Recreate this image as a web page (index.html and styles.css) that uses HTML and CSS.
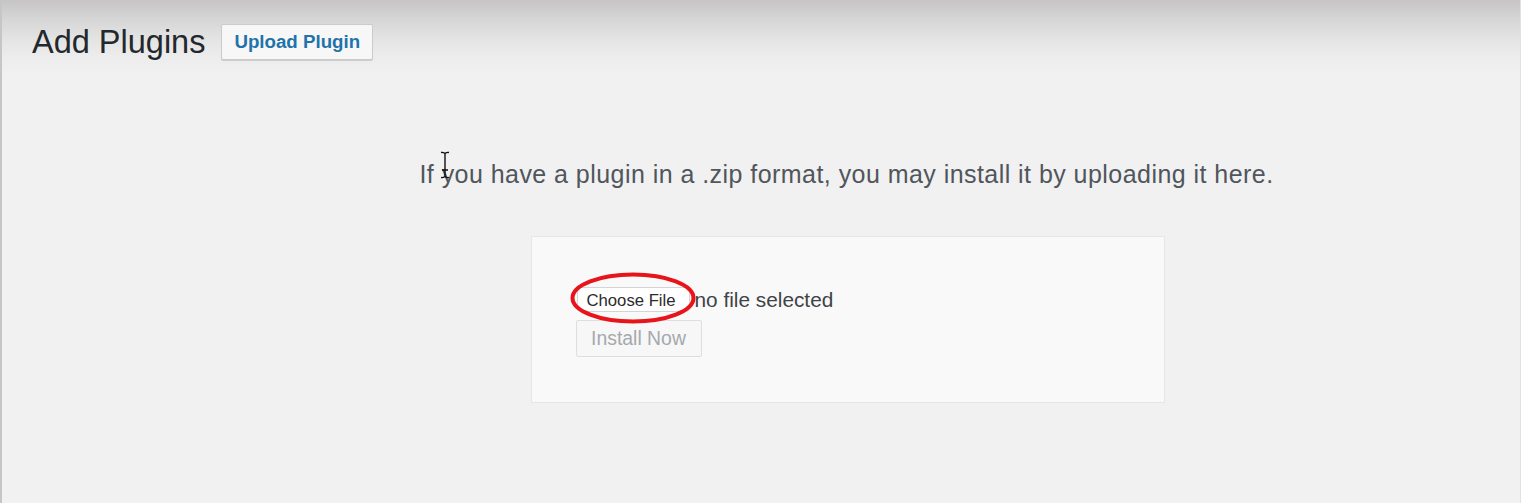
FILE: index.html
```html
<!DOCTYPE html>
<html lang="en">
<head>
<meta charset="utf-8">
<title>Add Plugins</title>
<link rel="stylesheet" href="styles.css">
</head>
<body>
<div class="page">
  <div class="header">
    <h1 class="title">Add Plugins</h1>
    <button class="upload-btn" type="button">Upload Plugin</button>
  </div>
  <div class="upload">
    <p class="help">If you have a plugin in a .zip format, you may install it by uploading it here.</p>
    <div class="box">
      <div class="file-row">
        <span class="choose">Choose File</span>
        <span class="nofile">no file selected</span>
      </div>
      <button class="install" type="button" disabled>Install Now</button>
      <svg class="ring" width="126" height="52" viewBox="0 0 126 52"><ellipse cx="63" cy="26" rx="60.5" ry="23.5" fill="none" stroke="#e8141c" stroke-width="4"/></svg>
    </div>
  </div>
  <svg class="ibeam" width="10" height="28" viewBox="0 0 10 28"><path d="M1 1.5 Q3 1 5 2.5 Q7 1 9 1.5 M5 2.5 V25.5 M1 26.5 Q3 27 5 25.5 Q7 27 9 26.5 M2 19 H8" fill="none" stroke="#111" stroke-width="1.4"/></svg>
</div>
</body>
</html>
```
FILE: styles.css
```css
html, body {
  margin: 0;
  padding: 0;
}
body {
  font-family: "Liberation Sans", Arial, sans-serif;
  background: #f1f1f1;
}
.page {
  position: relative;
  min-height: 503px;
  box-sizing: border-box;
  border-left: 2px solid #c4c6c8;
  border-right: 1px solid #e2e2e2;
  background: linear-gradient(#c6c4c4 0px, #d6d5d5 18px, #e3e3e3 38px, #ececec 55px, #f1f1f1 75px, #f1f1f1 100%);
  padding: 24px 0 0 30px;
}
.header {
  display: flex;
  align-items: center;
  gap: 16px;
}
.title {
  margin: 0;
  font-size: 32.5px;
  font-weight: 400;
  line-height: 36px;
  color: #23282d;
}
.upload-btn {
  height: 36px;
  padding: 0 12px;
  border: 1px solid #cbcbcb;
  border-radius: 2px;
  background: #f7f7f7;
  color: #1f73aa;
  font-family: "Liberation Sans", Arial, sans-serif;
  font-weight: 700;
  font-size: 18.7px;
  box-shadow: 0 1px 0 #ccc;
}
.upload {
  padding-left: 141px;
  text-align: center;
  margin-top: 99px;
}
.help {
  margin: 0;
  font-size: 25px;
  letter-spacing: 0.45px;
  line-height: 30px;
  color: #50565c;
}
.box {
  position: relative;
  display: inline-block;
  width: 634px;
  height: 167px;
  box-sizing: border-box;
  margin-top: 47px;
  margin-left: 2px;
  border: 1px solid #e6e6e6;
  background: #f9f9f9;
  padding: 50px 44px;
  text-align: left;
}
.file-row {
  display: flex;
  align-items: center;
  gap: 5px;
}
.choose {
  display: inline-block;
  height: 25px;
  line-height: 25px;
  box-sizing: border-box;
  padding: 0 13px 0 9px;
  border: 1px solid #d4d4d4;
  border-radius: 4px;
  background: #fff;
  color: #2b2b2b;
  font-size: 16.7px;
  margin-left: 1px;
}
.nofile {
  font-size: 20.8px;
  color: #3f4347;
}
.install {
  margin-top: 8px;
  height: 37px;
  width: 126px;
  border: 1px solid #dedede;
  border-radius: 2px;
  background: #f7f7f7;
  color: #a5a9ad;
  font-family: "Liberation Sans", Arial, sans-serif;
  font-size: 19.4px;
  padding: 0;
}
.ring {
  position: absolute;
  left: 38px;
  top: 35px;
}
.ibeam {
  position: absolute;
  left: 438px;
  top: 151px;
}
```
